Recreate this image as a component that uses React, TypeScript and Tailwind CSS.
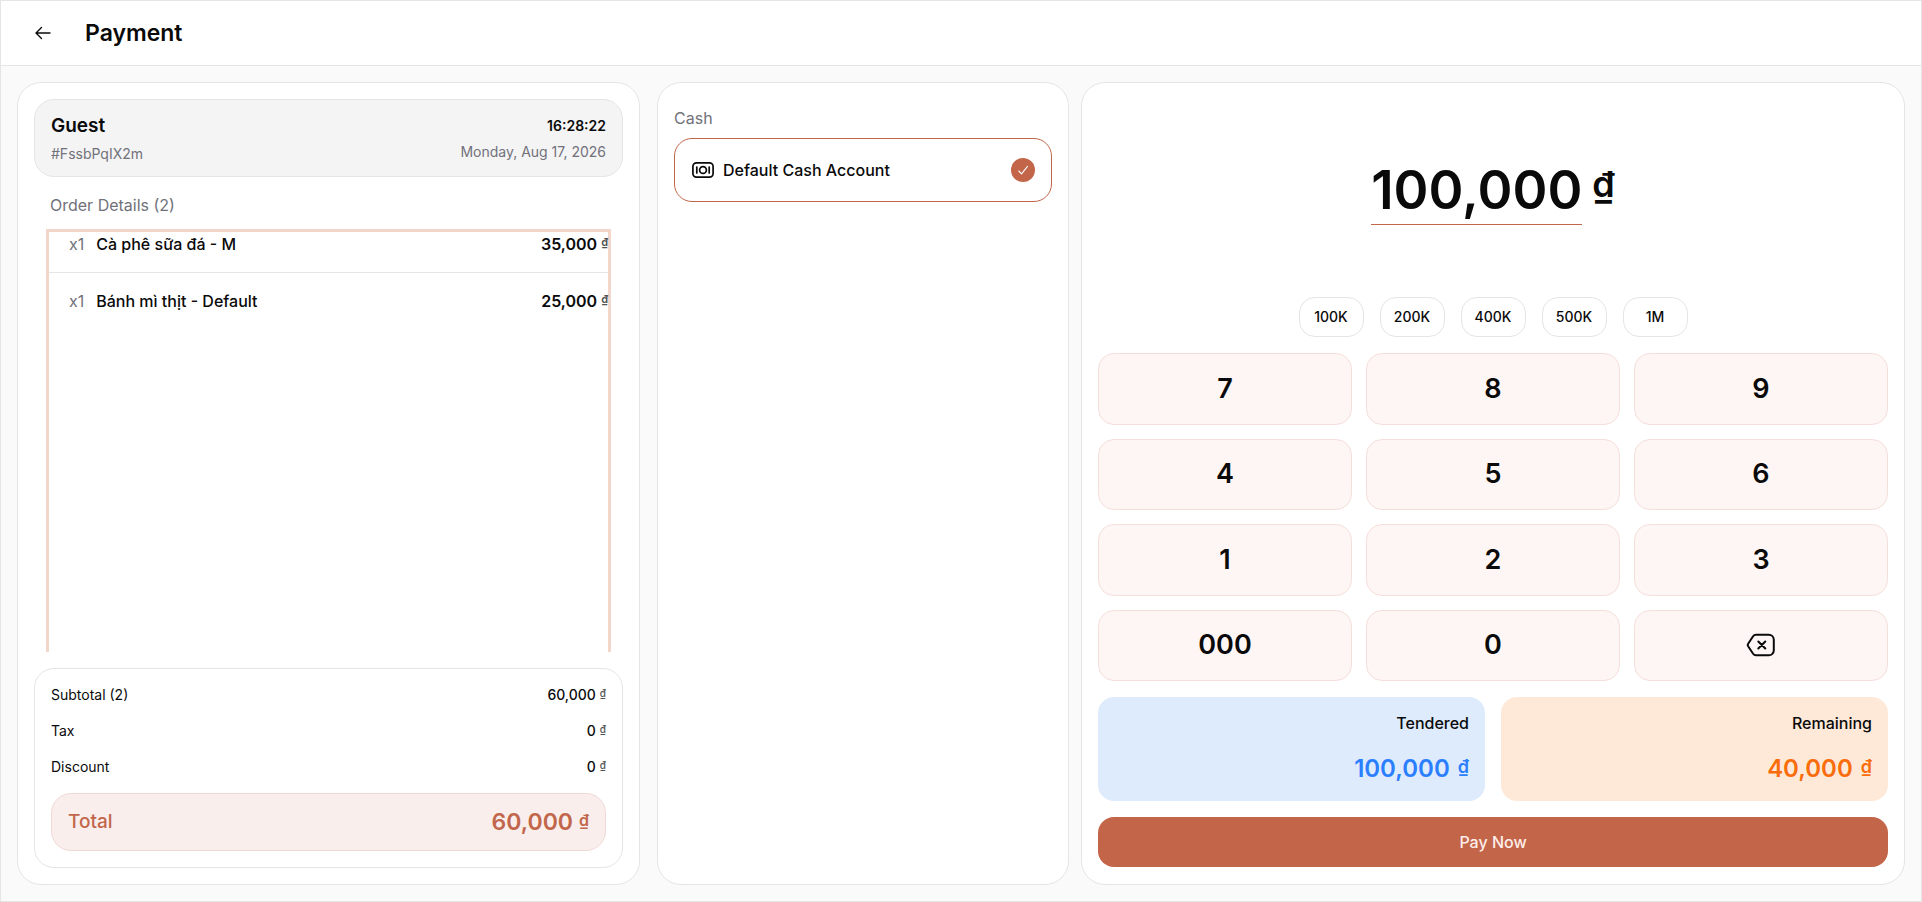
import clsx from 'clsx'

interface OrderItem {
  name: string
  quantity: number
  price: string
}

const items: OrderItem[] = [
  { name: 'Cà phê sữa đá - M', quantity: 1, price: '35,000' },
  { name: 'Bánh mì thịt - Default', quantity: 1, price: '25,000' },
]

const summary = [
  { label: 'Subtotal (2)', value: '60,000' },
  { label: 'Tax', value: '0' },
  { label: 'Discount', value: '0' },
]

const quickAmounts = ['100K', '200K', '400K', '500K', '1M']

const keys = ['7', '8', '9', '4', '5', '6', '1', '2', '3', '000', '0']

function BackIcon() {
  return (
    <svg
      width="20"
      height="20"
      viewBox="0 0 20 20"
      fill="none"
      stroke="currentColor"
      strokeWidth="1.4"
      strokeLinecap="round"
      strokeLinejoin="round"
    >
      <path d="M17 10H3M8.500 4.500 3 10l5.500 5.500" />
    </svg>
  )
}

function CashIcon() {
  return (
    <svg
      width="24"
      height="24"
      viewBox="0 0 24 24"
      fill="none"
      stroke="currentColor"
      strokeWidth="1.7"
      strokeLinecap="round"
    >
      <rect x="1.9" y="4.9" width="20.2" height="14.2" rx="3.6" />
      <circle cx="12" cy="12" r="3.4" />
      <path d="M5.800 9v6M18.200 9v6" />
    </svg>
  )
}

function CheckIcon() {
  return (
    <svg
      width="14"
      height="14"
      viewBox="0 0 14 14"
      fill="none"
      stroke="currentColor"
      strokeWidth="1.1"
      strokeLinecap="round"
      strokeLinejoin="round"
    >
      <path d="m2.800 8 2.700 2.800 6-7.400" />
    </svg>
  )
}

function BackspaceIcon() {
  return (
    <svg
      width="30"
      height="24"
      viewBox="0 0 30 24"
      fill="none"
      stroke="currentColor"
      strokeWidth="2"
      strokeLinecap="round"
      strokeLinejoin="round"
    >
      <path d="M10 1.700h12.800a5 5 0 0 1 5 5v10.600a5 5 0 0 1-5 5H10a3.500 3.500 0 0 1-2.900-1.500L2.300 13.500a2.500 2.500 0 0 1 0-3L7.100 3.200A3.500 3.500 0 0 1 10 1.700Z" />
      <path d="m12.300 8.500 7 7m0-7-7 7" />
    </svg>
  )
}

function Money({ value, className, symbolClassName }: { value: string; className?: string; symbolClassName?: string }) {
  return (
    <span className={clsx('flex items-start', className)}>
      {value}
      <span className={symbolClassName}>₫</span>
    </span>
  )
}

function OrderPanel() {
  return (
    <section className="flex w-[33%] flex-col rounded-3xl border border-neutral-200 bg-white p-4">
      <div className="flex justify-between rounded-[20px] border border-neutral-200 bg-[#f4f4f5] px-4 pt-3 pb-2">
        <div>
          <h2 className="text-[19px]/7 font-semibold">Guest</h2>
          <p className="text-sm/7 text-[#71717a]">#FssbPqIX2m</p>
        </div>
        <div className="text-right">
          <p className="text-sm/7 font-semibold">16:28:22</p>
          <p className="text-sm/6 text-[#71717a]">Monday, Aug 17, 2026</p>
        </div>
      </div>
      <h3 className="mt-4 px-4 text-base/6 text-[#71717a]">Order Details (2)</h3>
      <ul className="mx-3 mt-3 flex-1 border-3 border-b-0 border-[#f2d6ca]">
        {items.map((item, index) => (
          <li
            key={item.name}
            className={clsx(
              'flex items-center justify-between pl-5 text-base/6',
              index === 0 ? 'border-b border-neutral-200 pb-4' : 'py-4'
            )}
          >
            <span className="flex gap-3">
              <span className="text-[#71717a]">x{item.quantity}</span>
              <span className="font-medium">{item.name}</span>
            </span>
            <Money value={item.price} className="font-semibold" symbolClassName="pl-1 text-[11px]/5 text-neutral-600" />
          </li>
        ))}
      </ul>
      <div className="mt-4 flex flex-col gap-4 rounded-[20px] border border-neutral-200 p-4">
        {summary.map((row) => (
          <div key={row.label} className="flex justify-between text-sm/5">
            <span>{row.label}</span>
            <Money value={row.value} className="font-medium" symbolClassName="pl-1 text-[10px]/4 text-neutral-600" />
          </div>
        ))}
        <div className="flex items-center justify-between rounded-[20px] border border-[#efd9d6] bg-[#faeeed] px-4 py-3 text-[#c1664a]">
          <span className="text-[19px]/8 font-medium">Total</span>
          <Money value="60,000" className="text-[23px]/8 font-semibold" symbolClassName="pl-1.5 text-base/7" />
        </div>
      </div>
    </section>
  )
}

function AccountPanel() {
  return (
    <section className="rounded-3xl border border-neutral-200 bg-white px-4 py-[23px]">
      <h3 className="text-base/6 text-[#71717a]">Cash</h3>
      <button className="mt-2 flex h-16 w-full items-center gap-2 rounded-[18px] border border-[#c1664a] px-4">
        <CashIcon />
        <span className="flex-1 text-left text-base/6 font-medium">Default Cash Account</span>
        <span className="flex size-6 items-center justify-center rounded-full bg-[#c36549] text-white">
          <CheckIcon />
        </span>
      </button>
    </section>
  )
}

function KeypadPanel() {
  return (
    <section className="flex flex-col gap-4 rounded-3xl border border-neutral-200 bg-white px-4 pt-4 pb-[17px]">
      <div className="flex flex-1 items-center justify-center gap-2.5 text-[53px]/17 font-semibold">
        <span className="border-b border-[#c1664a]">100,000</span>
        <span className="pb-3 text-4xl">₫</span>
      </div>
      <div className="flex justify-center gap-4">
        {quickAmounts.map((amount) => (
          <button
            key={amount}
            className="h-10 min-w-[65px] rounded-2xl border border-neutral-200 px-3 text-sm font-medium"
          >
            {amount}
          </button>
        ))}
      </div>
      <div className="grid h-82 auto-rows-fr grid-cols-3 gap-3.5">
        {keys.map((key) => (
          <button key={key} className="rounded-2xl border border-[#f5dfdb] bg-[#fef6f4] text-[27px] font-semibold">
            {key}
          </button>
        ))}
        <button
          aria-label="Delete"
          className="flex items-center justify-center rounded-2xl border border-[#f5dfdb] bg-[#fef6f4]"
        >
          <BackspaceIcon />
        </button>
      </div>
      <div className="grid grid-cols-2 gap-4 text-right font-medium">
        <div className="flex flex-col items-end gap-4 rounded-2xl bg-[#deebfd] px-4 py-3.5">
          <span className="text-base/6">Tendered</span>
          <Money value="100,000" className="text-2xl/9 font-semibold text-[#2b7fff]" symbolClassName="pl-2 text-lg/8" />
        </div>
        <div className="flex flex-col items-end gap-4 rounded-2xl bg-[#fee9d9] px-4 py-3.5">
          <span className="text-base/6">Remaining</span>
          <Money value="40,000" className="text-2xl/9 font-semibold text-[#f96d0b]" symbolClassName="pl-2 text-lg/8" />
        </div>
      </div>
      <button className="h-[50px] rounded-2xl bg-[#c36549] text-base font-medium text-[#fdeee9]">Pay Now</button>
    </section>
  )
}

export default function App() {
  return (
    <div className="flex min-h-screen flex-col border border-neutral-200 bg-[#fafafa] font-['Inter',sans-serif] text-neutral-950">
      <header className="flex items-center gap-6 border-b border-neutral-200 bg-white px-6 py-3.5">
        <button aria-label="Back" className="p-2">
          <BackIcon />
        </button>
        <h1 className="text-[23px]/8 font-semibold">Payment</h1>
      </header>
      <main className="flex flex-1 gap-[17px] p-4">
        <OrderPanel />
        <div className="grid flex-1 grid-cols-[1fr_2fr] gap-3">
          <AccountPanel />
          <KeypadPanel />
        </div>
      </main>
    </div>
  )
}
